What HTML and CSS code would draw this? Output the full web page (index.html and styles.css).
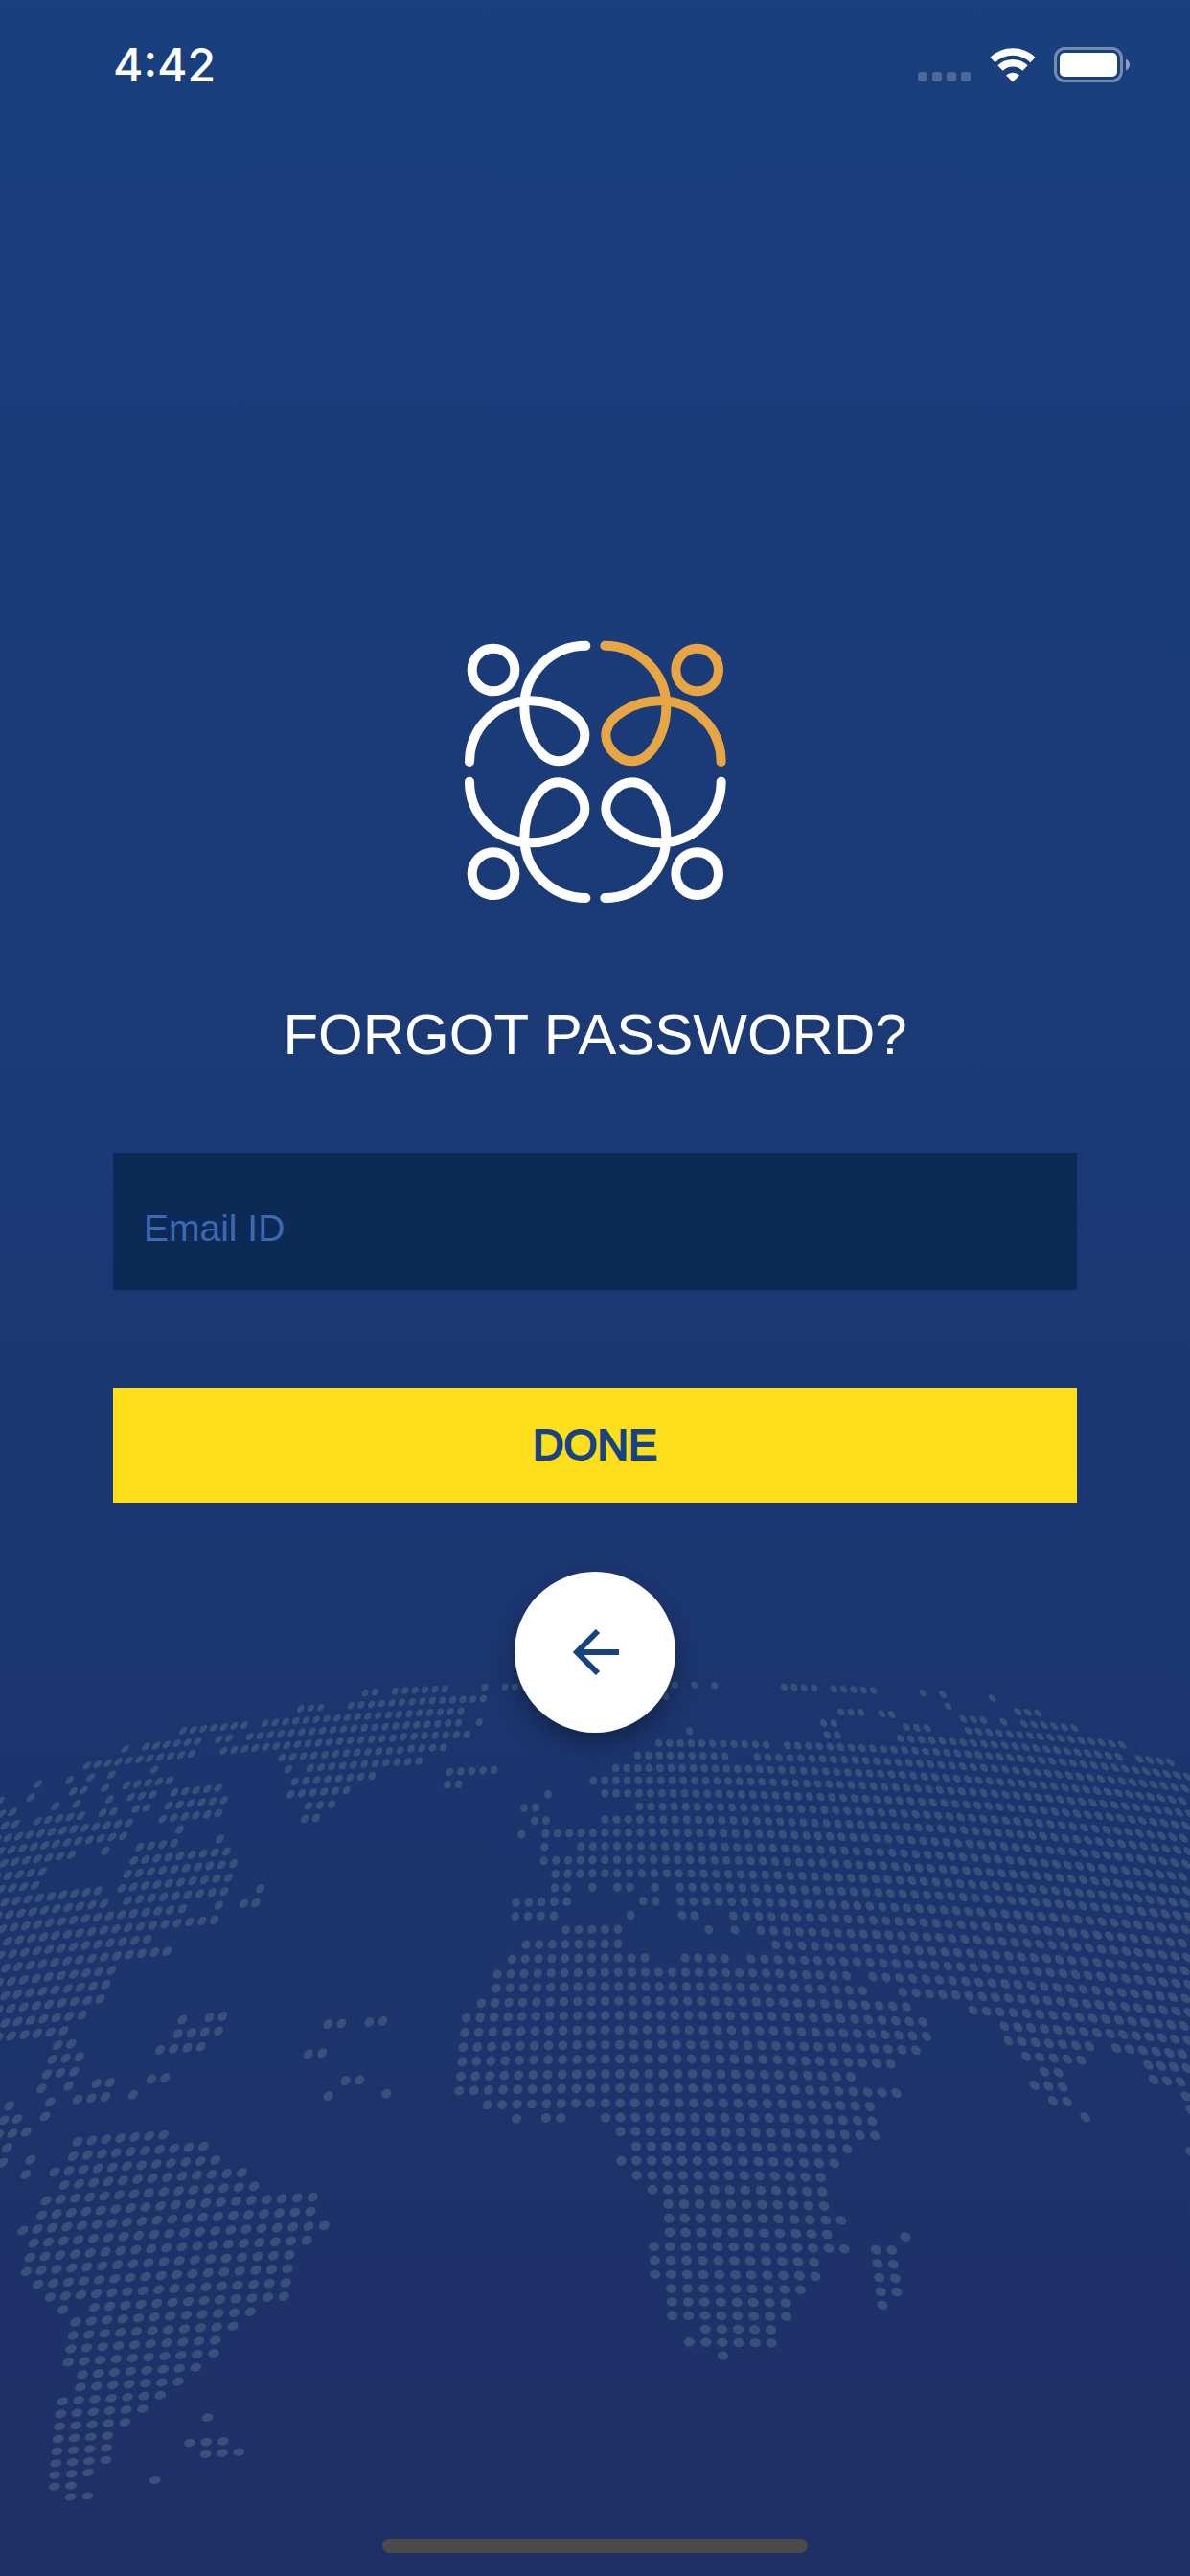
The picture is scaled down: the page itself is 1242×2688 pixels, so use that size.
FILE: index.html
```html
<!DOCTYPE html>
<html lang="en">
<head>
<meta charset="utf-8">
<meta name="viewport" content="width=device-width, initial-scale=1">
<title>Forgot password</title>
<link rel="stylesheet" href="styles.css">
</head>
<body>
<div class="screen">
  <svg class="map" id="map" viewBox="0 0 3726 2844" aria-hidden="true"></svg>

  <header class="status">
    <span class="status-time">4:42</span>
    <div class="status-icons">
      <svg width="56" height="38" viewBox="0 0 56 38" aria-hidden="true">
        <g fill="#fff" opacity=".22">
          <rect x="0" y="26" width="10" height="10" rx="3"/>
          <rect x="15" y="26" width="10" height="10" rx="3"/>
          <rect x="30" y="26" width="10" height="10" rx="3"/>
          <rect x="45" y="26" width="10" height="10" rx="3"/>
        </g>
      </svg>
      <svg width="48" height="38" viewBox="0 0 48 38" aria-hidden="true">
        <g fill="none" stroke="#fff" stroke-width="7.500">
          <path d="M3 13.500A30 30 0 0 1 45 13.500"/>
          <path d="M11 22A18.500 18.500 0 0 1 37 22"/>
        </g>
        <path fill="#fff" d="M24 36.500L17 29.500A10.500 10.500 0 0 1 31 29.500Z"/>
      </svg>
      <svg width="80" height="38" viewBox="0 0 80 38" aria-hidden="true">
        <rect x="1.500" y="1.500" width="69" height="34" rx="10" fill="none" stroke="#fff" stroke-width="3" opacity=".4"/>
        <rect x="6" y="6" width="60" height="25" rx="5" fill="#fff"/>
        <path d="M75 12.500Q79 14.500 79 18.500T75 24.500Z" fill="#fff" opacity=".5"/>
      </svg>
    </div>
  </header>

  <main class="content">
    <svg class="logo" viewBox="39 52 831 831" role="img" aria-label="Logo">
      <defs>
        <g id="person" fill="none" stroke-width="30" stroke-linecap="round">
          <circle cx="135" cy="148" r="67"/>
          <path d="M424 72C318 72 232 158 232 262C232 352 283 434 339 434C384 434 421 389 421 352C421 296 334 245 252 245C146 245 60 331 60 436"/>
        </g>
      </defs>
      <use href="#person" stroke="#fff"/>
      <use href="#person" stroke="#e8a543" transform="translate(908 0) scale(-1 1)"/>
      <use href="#person" stroke="#fff" transform="translate(0 934) scale(1 -1)"/>
      <use href="#person" stroke="#fff" transform="translate(908 934) scale(-1 -1)"/>
    </svg>

    <h1 class="title">FORGOT PASSWORD?</h1>

    <form class="form">
      <input class="field" type="email" placeholder="Email ID" aria-label="Email ID">
      <button class="done" type="button">DONE</button>
    </form>

    <button class="back" type="button" aria-label="Back">
      <svg width="50" height="48" viewBox="0 0 50 48" aria-hidden="true">
        <path d="M50 24H7M28 2L6 24L28 46" fill="none" stroke="#174384" stroke-width="6"/>
      </svg>
    </button>
  </main>

  <footer class="home"><span class="home-bar"></span></footer>
</div>
<script src="map.js"></script>
</body>
</html>
```
FILE: styles.css
```css
* {
  box-sizing: border-box;
}

body {
  margin: 0;
  background: #1f3066;
  font-family: "Liberation Sans", Arial, sans-serif;
}

.screen {
  position: relative;
  display: flex;
  flex-direction: column;
  min-height: 100vh;
  background: linear-gradient(#193f7d, #1b3975 45%, #1c356e 68%, #1f3066);
}

/* Decorative dotted globe behind the form */
.map {
  position: absolute;
  left: 0;
  bottom: 0;
  width: 100%;
  fill: #38507a;
}

.status {
  display: flex;
  justify-content: space-between;
  align-items: center;
  height: 136px;
  padding: 0 62px 0 118px;
}

.status-time {
  color: #fff;
  font: 500 48px/48px Inter, sans-serif;
}

.status-icons {
  display: flex;
  align-items: center;
  gap: 19px;
}

.content {
  position: relative;
  display: flex;
  flex: 1;
  flex-direction: column;
  align-items: center;
  padding: 531px 118px 0;
}

.logo {
  width: 277px;
  height: 277px;
}

.title {
  margin: 101px 0 88px;
  color: #fff;
  font-size: 60px;
  font-weight: 400;
  line-height: 70px;
}

.form {
  display: flex;
  flex-direction: column;
  gap: 102px;
  width: 100%;
}

.field {
  width: 100%;
  height: 143px;
  padding: 14px 32px 0;
  border: 0;
  border-radius: 0;
  outline: 0;
  background: #0d2a57;
  color: #fff;
  font: inherit;
  font-size: 39px;
}

.field::placeholder {
  color: #3d69b3;
  opacity: 1;
}

.done {
  height: 120px;
  border: 0;
  background: #ffdf1b;
  color: #174384;
  font: inherit;
  font-size: 45px;
  -webkit-text-stroke: 2px #174384;
}

.back {
  display: flex;
  align-items: center;
  justify-content: center;
  width: 168px;
  height: 168px;
  margin-top: 72px;
  padding: 0;
  border: 0;
  border-radius: 50%;
  background: #fff;
  box-shadow: 0 12px 24px rgba(0, 0, 0, .3);
}

.home {
  position: relative;
  display: flex;
  justify-content: center;
  padding: 24px;
}

.home-bar {
  width: 444px;
  height: 15px;
  border-radius: 8px;
  background: #4a4a4a;
}
```
FILE: map.js
```js
// Dotted world map. Each run is "x y x2 y2 count", or "x y" for a lone dot.
// Every group has its own origin inside the map's 3726 x 2844 canvas.
const groups = [
  { x: 0, y: 0, runs: `
    1143 80 1174 77 2,1099 119 1227 111 5,941 129 1004 125 3,573 198 765 180 7,830 175 1249 147 14,
    457 248 619 231 6,685 225 717 221 2,782 216 1239 183 15,392 255,273 307 600 270 11,700 261 1230 221 17,
    883 282 1253 259 12,483 320,903 319,971 315 1243 296 9,923 357 1165 340 8,910 397 1085 384 6,
    966 433 1038 428 3,954 474 990 471 2,119 365,96 407,218 352,284 344,349 335,229 388 262 384 2,329 377,
    396 369 531 353 5,343 413,410 405 478 398 3,240 427,173 434,546 391 683 377 5,425 443 459 439 2,
    528 432 701 415 6,509 474 684 456 6,562 508,0 417,5 458 39 453 2,15 495 48 490 2,117 481 253 464 5,
    321 455 355 451 2,-9 538 404 486 13,2 575 386 527 12,12 613 224 586 7,330 574,437 562 545 550 4,688 537,
    -10 657 132 639 5,419 605 709 576 9,3 694 110 682 4,399 647 731 614 10,15 735 307 699 9,
    381 691 715 658 10,-7 778 325 739 10,399 730 702 701 9,815 692,7 818 571 755 16,685 745,763 739 801 736 2,
    24 857 671 790 18,2 901 461 851 13,18 941 523 888 14,-3 987 349 948 10,16 1027 331 993 9,
    -5 1072 314 1038 9,16 1113 257 1088 7,-5 1158 199 1137 6,181 1182 223 1178 2,164 1227 248 1219 3,
    147 1273 232 1265 3,130 1318,215 1310,302 1302 344 1299 2,243 1352 330 1344 3,157 1360,417 1337,
    474 1288 517 1284 2,141 1405,29 1372,12 1417 54 1413 2,571 1103,655 1096 697 1092 2,557 1147 684 1138 4,
    501 1197 629 1187 4,1027 1116 1069 1114 2,1156 1110 1198 1107 2,965 1210 1009 1207 2,
    1082 1293 1126 1291 2,1028 1342,1210 1334` },
  { x: 1230, y: 0, runs: `
    7 74 163 67 6,29 109 283 98 9,51 144 213 136 6,42 181 206 173 6,271 171,33 217 232 209 7,57 254 158 250 4,
    47 295 82 293 2,288 62,351 61 382 60 2,883 55,945 55,1007 56,855 90,178 327 317 321 5,171 367 206 365 2,
    486 397,411 440 447 438 2,444 480 480 479 2,403 522,929 199,833 237 1169 242 11,766 275 1040 278 9,
    1141 280 1209 282 3,698 315 1218 321 16,628 354 1226 360 18,664 394 1234 401 17,772 435 1207 441 13,
    664 476 1213 482 16,478 520 1221 523 21,475 562,589 560 1228 566 18,473 605 1235 608 21,
    509 646 1205 650 19,507 690 546 689 2,625 688,703 688 742 688 2,821 688,899 688 1212 692 9,
    386 736 545 733 5,784 731 823 732 2,902 732 1220 737 9,383 779 504 777 4,745 775,906 776 945 776 2,
    1066 777 1226 781 5,542 821 705 820 5,989 821,1071 822,1152 823 1233 826 3,417 868 705 865 8,1199 868,
    373 913 789 909 11,915 909 1039 911 4,1122 912 1206 914 3,327 960 1211 958 22,324 1004 1217 1003 22,
    277 1051 1224 1048 23,230 1097 1231 1093 24,225 1143 1236 1138 24,220 1189 1200 1184 23,
    217 1234 1204 1228 23,213 1280 1209 1275 23,208 1325 1214 1320 23,296 1369 1219 1366 21,387 1412,
    480 1410 526 1410 2,666 1409 1225 1411 13` },
  { x: 2466, y: 0, runs: `
    -11 61 83 64 4,145 67 269 72 5,424 80,486 84,641 96,502 121,721 138 784 142 3,167 139 230 141 3,
    295 145 326 147 2,550 161 613 165 3,676 170,740 176 898 189 6,113 174 145 175 2,372 186 437 190 3,
    566 198 1047 242 16,124 211 156 212 2,353 222 1037 279 22,1101 286 1198 297 4,-1 244 1252 341 39,
    8 283 1244 379 38,16 322 1236 417 37,25 362 1259 458 37,33 403 1247 495 36,7 442 1240 535 36,
    13 484 1254 575 36,22 525 1247 615 35,29 568 1237 655 34,37 610 1250 699 34,8 652 1243 738 34,
    15 695 1256 779 34,23 739 1246 821 33,30 782 1236 863 32,37 827 1251 907 32,4 870 1243 949 32,
    12 915 1255 992 32,17 961 185 965 5,267 968 1246 1036 25,24 1004 235 1012 6,361 1017 1256 1080 23,
    31 1050 372 1062 9,581 1073 1241 1122 17,38 1095 424 1110 10,679 1123 1253 1167 15,44 1140 435 1155 10,
    691 1168 945 1186 7,1029 1191 1236 1210 6,8 1185 402 1198 10,747 1217 919 1229 5,1129 1244 1250 1254 4,
    12 1230 323 1241 8,804 1265 848 1268 2,1146 1290 1230 1297 3,18 1276 198 1281 5,773 1308 861 1313 3,
    1247 1342,24 1322 341 1332 8,831 1356 875 1359 2,1262 1385,29 1367 258 1374 6,932 1408,35 1413 265 1420 6` },
  { x: 0, y: 1350, runs: `
    -4 112 82 104 3,22 154,8 200,95 191,81 237,243 134 512 113 7,229 180 637 149 10,171 229 674 192 12,
    202 270 757 231 13,144 319 795 274 15,131 364 979 308 19,71 412 972 353 20,105 452 1015 397 20,
    94 497 960 443 19,82 541 906 489 18,119 581 900 532 17,157 621 894 576 16,197 660,295 653 889 619 13,
    237 699 784 667 12,229 741 729 712 11,222 783 674 756 10,214 825 669 797 10,258 863 613 841 8,
    252 903 558 885 7,196 947 502 928 7,190 987 447 970 6,186 1026 391 1013 5,182 1065 336 1055 4,
    178 1104 333 1093 4,175 1141 331 1131 4,172 1178 276 1170 3,170 1214 222 1211 2,221 1246 274 1243 2,
    650 998,594 1077 698 1072 3,644 1112 748 1106 3,485 1194` },
  { x: 1230, y: 1350, runs: `
    713 103 1230 107 12,762 149 1187 152 10,715 194 1192 197 11,764 240 1196 242 10,813 284 1200 287 9,
    863 330 1205 332 8,865 374 1208 376 8,867 418 1212 421 8,818 463 1216 465 9,820 506 1219 509 9,
    821 550 1223 553 9,872 594 1226 597 8,874 636 1230 639 8,875 679 1232 682 8,979 721 1184 723 5,
    929 762 1186 765 6,1033 804` },
  { x: 2466, y: 1350, runs: `
    40 109 273 115 6,-1 153 187 157 5,4 199 146 202 4,8 244 104 246 3,13 289 109 291 3,17 333 114 336 3,
    21 378 168 381 4,26 422 124 425 3,30 466 178 470 4,33 510 83 512 2,37 554 87 556 2,40 598,369 432,
    277 473 326 474 2,282 516 331 518 2,287 560 337 562 2,292 604 342 605 2,297 646,1262 166` }
];

const MERIDIAN = 1896;
const BEND = 0.045;
const SVG_NS = "http://www.w3.org/2000/svg";
const map = document.getElementById("map");

const columnStep = y => 30.3 + 0.0135 * y - 0.0000016 * y * y;

// A dot is a circle of the flat grid, skewed by the globe's curvature.
function addDot(x, y) {
  const step = columnStep(y);
  const k = (x - MERIDIAN) / step;
  const slope = 2 * BEND * (k - 3);
  const lean = k * (y < 1600 ? 0.43 : 0.43 - (y - 1600) / 3000);
  const rowStep = 45.5 - 7.5 * ((y - 1400) / 1100) ** 2;
  const dot = document.createElementNS(SVG_NS, "circle");
  dot.setAttribute("r", "0.33");
  dot.setAttribute("transform", `matrix(${[step, slope, lean, rowStep, x, y].map(n => n.toFixed(2)).join(" ")})`);
  map.append(dot);
}

for (const group of groups) {
  for (const run of group.runs.split(",")) {
    const [x1, y1, x2 = x1, y2 = y1, count = 1] = run.trim().split(/\s+/).map(Number);
    const middle = (group.x + (x1 + x2) / 2 - MERIDIAN) / columnStep(group.y + y1);
    const squeeze = 3 * (0.00004 + 4.4e-7 * (group.y + y1)) * middle;
    for (let i = 0; i < count; i++) {
      const t = count > 1 ? i / (count - 1) : 0;
      const bow = i * (count - 1 - i);
      addDot(group.x + x1 + (x2 - x1) * t + squeeze * bow, group.y + y1 + (y2 - y1) * t - BEND * bow);
    }
  }
}
```
